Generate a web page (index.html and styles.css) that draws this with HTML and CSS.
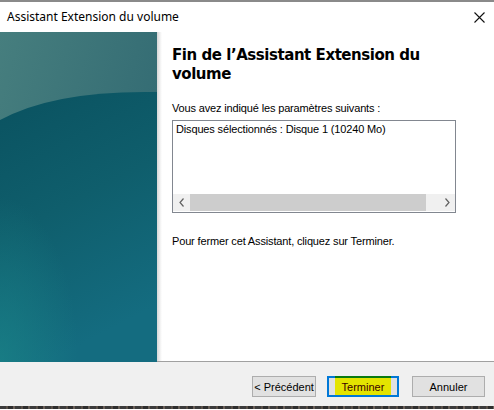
FILE: index.html
```html
<!DOCTYPE html>
<html lang="fr">
<head>
<meta charset="utf-8">
<title>Assistant Extension du volume</title>
<link rel="stylesheet" href="styles.css">
</head>
<body>
<div class="window">
  <div class="titlebar">
    <span class="title">Assistant Extension du volume</span>
    <svg class="close" width="11" height="11" viewBox="0 0 11 11"><path d="M0.5 0.5 L10.5 10.5 M10.5 0.5 L0.5 10.5" stroke="#111" stroke-width="1.1" fill="none"/></svg>
  </div>
  <div class="main">
    <div class="banner">
      <svg width="157" height="330" viewBox="0 0 157 330">
        <defs>
          <linearGradient id="topg" x1="0" y1="0" x2="1" y2="0.6">
            <stop offset="0" stop-color="#467e7e"/>
            <stop offset="1" stop-color="#316972"/>
          </linearGradient>
          <linearGradient id="botg" x1="0" y1="0" x2="0.3" y2="1">
            <stop offset="0" stop-color="#0a5260"/>
            <stop offset="0.5" stop-color="#0f5e6c"/>
            <stop offset="1" stop-color="#146c80"/>
          </linearGradient>
          <radialGradient id="glow" cx="0" cy="1" r="0.5">
            <stop offset="0" stop-color="#1a8488" stop-opacity="0.7"/>
            <stop offset="1" stop-color="#1a8488" stop-opacity="0"/>
          </radialGradient>
        </defs>
        <rect width="157" height="330" fill="url(#topg)"/>
        <path d="M0 88 Q55 58 157 60 L157 330 L0 330 Z" fill="url(#botg)"/>
        <rect width="157" height="330" fill="url(#glow)"/>
      </svg>
    </div>
    <div class="shadow"></div>
    <div class="content">
      <h1 class="heading">Fin de l’Assistant Extension du volume</h1>
      <p class="label">Vous avez indiqué les paramètres suivants :</p>
      <div class="listbox">
        <div class="list-items">Disques sélectionnés : Disque 1 (10240 Mo)</div>
        <div class="hscroll">
          <span class="arrow"><svg width="6" height="9" viewBox="0 0 6 9"><path d="M4.5 0.5 L1 4.5 L4.5 8.5" stroke="#606060" stroke-width="1.2" fill="none"/></svg></span>
          <span class="track"><span class="thumb"></span></span>
          <span class="arrow"><svg width="6" height="9" viewBox="0 0 6 9"><path d="M1.5 0.5 L5 4.5 L1.5 8.5" stroke="#606060" stroke-width="1.2" fill="none"/></svg></span>
        </div>
      </div>
      <p class="closing">Pour fermer cet Assistant, cliquez sur Terminer.</p>
    </div>
  </div>
  <div class="footer">
    <button class="btn btn-back">&lt; Précédent</button>
    <button class="btn btn-finish"><span class="hl"></span><span class="btn-text">Terminer</span></button>
    <button class="btn btn-cancel">Annuler</button>
  </div>
  <div class="behind"></div>
</div>
</body>
</html>
```
FILE: styles.css
```css
* { box-sizing: border-box; }
html, body { margin: 0; padding: 0; }
body { width: 494px; height: 410px; overflow: hidden; background: #fff; }

.window {
  width: 494px;
  height: 410px;
  display: flex;
  flex-direction: column;
  border-top: 2px solid #8a8a8a;
  background: #fff;
}

.titlebar {
  height: 30px;
  display: flex;
  align-items: center;
  justify-content: space-between;
  padding: 0 9px 0 7px;
  background: #fff;
}
.title {
  font-family: "Noto Sans", "Liberation Sans", sans-serif;
  font-size: 12px;
  color: #000;
  padding-bottom: 1px;
}
.close { display: block; margin-top: 1px; }

.main {
  height: 330px;
  display: flex;
  border-bottom: 1px solid #a0a0a0;
}
.banner { width: 157px; height: 330px; flex: none; }
.banner svg { display: block; }
.shadow {
  width: 5px;
  flex: none;
  background: linear-gradient(to right, #d6d6d6, #f4f4f4 70%, #fff);
}
.content {
  flex: 1;
  padding: 14px 0 0 10px;
  font-family: "Liberation Sans", Arial, sans-serif;
  font-size: 11px;
  color: #000;
}
.heading {
  margin: 0;
  width: 290px;
  font-family: "DejaVu Sans", Verdana, sans-serif;
  font-weight: bold;
  font-size: 15px;
  line-height: 19px;
  color: #000;
  letter-spacing: -0.45px;
}
.label {
  margin: 18px 0 0 0;
  line-height: 13px;
  letter-spacing: -0.15px;
}
.listbox {
  margin-top: 5px;
  width: 284px;
  height: 93px;
  border: 1px solid #828790;
  display: flex;
  flex-direction: column;
  background: #fff;
}
.list-items {
  flex: 1;
  padding: 2px 0 0 3px;
  line-height: 13px;
  letter-spacing: -0.15px;
}
.hscroll {
  height: 17px;
  display: flex;
  align-items: center;
  background: #f0f0f0;
  margin: 0 0 1px 0;
}
.arrow {
  width: 17px;
  height: 17px;
  display: flex;
  align-items: center;
  justify-content: center;
}
.arrow svg { display: block; }
.track { flex: 1; height: 17px; display: flex; }
.thumb { width: 236px; background: #cdcdcd; }

.closing {
  margin: 22px 0 0 0;
  line-height: 13px;
  letter-spacing: -0.15px;
}

.footer {
  height: 44px;
  background: #f0f0f0;
  display: flex;
  align-items: flex-start;
  padding: 14px 9px 0 0;
  justify-content: flex-end;
}
.btn {
  height: 21px;
  border: 1px solid #adadad;
  background: #e1e1e1;
  font-family: "Liberation Sans", Arial, sans-serif;
  font-size: 11px;
  color: #000;
  padding: 0;
}
.btn-back { width: 64px; }
.btn-finish {
  width: 72px;
  margin-left: 11px;
  border: 2px solid #0078d7;
  position: relative;
  color: #3a0000;
}
.hl {
  position: absolute;
  left: 6px;
  top: -2px;
  width: 56px;
  height: 19px;
  background: #e4e400;
  border-top: 2px solid #0a7a10;
}
.btn-text { position: relative; }
.btn-cancel { width: 73px; margin-left: 13px; }

.behind {
  height: 3px;
  background: repeating-linear-gradient(to right, #3c3c3c 0 6px, #5a5048 6px 8px, #2e2e2e 8px 13px, #6a6058 13px 15px);
}
```
